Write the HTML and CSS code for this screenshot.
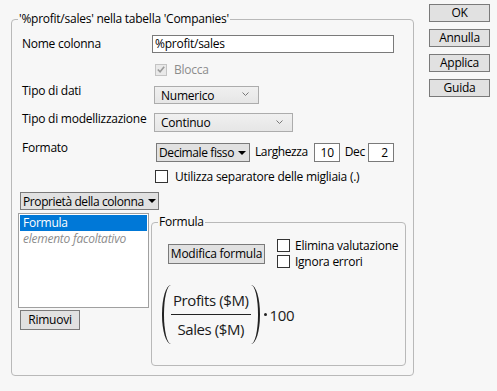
FILE: index.html
```html
<!DOCTYPE html><html><head><meta charset="utf-8">
<title>Colonna - %profit/sales</title>
<link rel="stylesheet" href="styles.css">
</head>
<body>
<div class="dialog">

<fieldset class="main">
	<legend>'%profit/sales' nella tabella 'Companies'</legend>

	<div class="row r-name">
		<span class="lbl">Nome colonna</span>
		<div class="textbox wide">%profit/sales</div>
	</div>
	<div class="row r-lock">
		<span class="lbl"></span>
		<span class="check disabled"><span class="box"><svg width="11" height="11" viewBox="0 0 11 11"><path d="M2 5.5 L4.5 8 L9 2.5" fill="none" stroke="#9a9a9a" stroke-width="1.8"/></svg></span>Blocca</span>
	</div>
	<div class="row r-type">
		<span class="lbl">Tipo di dati</span>
		<div class="combo w1">Numerico<svg class="chev" width="7" height="5" viewBox="0 0 7 5"><path d="M0.5 0.5 L3.5 3.5 L6.5 0.5" fill="none" stroke="#777" stroke-width="1"/></svg></div>
	</div>
	<div class="row r-model">
		<span class="lbl">Tipo di modellizzazione</span>
		<div class="combo w2">Continuo<svg class="chev" width="7" height="5" viewBox="0 0 7 5"><path d="M0.5 0.5 L3.5 3.5 L6.5 0.5" fill="none" stroke="#777" stroke-width="1"/></svg></div>
	</div>
	<div class="row r-format">
		<span class="lbl">Formato</span>
		<div class="menu fmt">Decimale fisso <span class="tri"></span></div>
		<span class="small-lbl">Larghezza</span>
		<div class="textbox num">10</div>
		<span class="small-lbl dec">Dec</span>
		<div class="textbox num">2</div>
	</div>
	<div class="row r-sep">
		<span class="lbl"></span>
		<span class="check"><span class="box"></span>Utilizza separatore delle migliaia (.)</span>
	</div>

	<div class="menu props">Proprietà della colonna <span class="tri"></span></div>

	<div class="lower">
		<div class="side">
			<div class="listbox">
				<div class="item sel">Formula</div>
				<div class="item opt">elemento facoltativo</div>
			</div>
			<button class="btn remove">Rimuovi</button>
		</div>

		<fieldset class="formula">
			<legend>Formula</legend>
			<div class="f-top">
				<button class="btn edit">Modifica formula</button>
				<div class="f-checks">
					<span class="check"><span class="box"></span>Elimina valutazione</span>
					<span class="check"><span class="box"></span>Ignora errori</span>
				</div>
			</div>
			<div class="expr">
				<span class="paren left"></span>
				<span class="frac">
					<span class="num-part">Profits ($M)</span>
					<span class="den-part">Sales ($M)</span>
				</span>
				<span class="paren right"></span>
				<span class="dot"></span>
				<span class="factor">100</span>
			</div>
		</fieldset>
	</div>
</fieldset>

<div class="actions">
	<button class="btn act">OK</button>
	<button class="btn act">Annulla</button>
	<button class="btn act">Applica</button>
	<button class="btn act">Guida</button>
</div>

</div>
</body>
</html>
```

FILE: styles.css
```css
body {
	margin: 0;
	background: #f7f7f7;
	font-family: "Open Sans", "Liberation Sans", sans-serif;
	font-size: 12px;
	letter-spacing: -0.25px;
	color: #000;
}
.dialog {
	display: flex;
	align-items: flex-start;
	width: 497px;
	height: 391px;
}
fieldset {
	margin: 0;
	border: 1px solid #b9b9b9;
	border-radius: 4px;
	min-width: 0;
}
legend {
	line-height: 16px;
	padding: 0 1px;
}
.main {
	margin: 11px 0 0 11px;
	width: 403px;
	height: 365px;
	box-sizing: border-box;
	padding: 8px 7px 0 6px;
}
.row {
	display: flex;
	align-items: flex-start;
}
.lbl {
	width: 130px;
	margin-left: 4px;
	line-height: 16px;
	flex: none;
}
.r-name { height: 18px; }
.r-name .lbl { margin-top: 1px; }
.r-lock { margin-top: 9px; height: 14px; }
.r-type { margin-top: 10px; }
.r-type .lbl { margin-top: -3px; }
.r-model { margin-top: 9px; }
.r-model .lbl { margin-top: -2px; }
.r-format { margin-top: 11px; }
.r-format .lbl { margin-top: -3px; }
.r-sep { margin-top: 7px; }

.textbox {
	background: #fff;
	border: 1px solid #7a7a7a;
	height: 18px;
	box-sizing: border-box;
	line-height: 16px;
	padding: 0 2px;
}
.textbox.wide { width: 242px; }
.textbox.num {
	width: 26px;
	text-align: right;
	padding: 0 5px;
	height: 19px;
	line-height: 17px;
}
.combo {
	display: flex;
	align-items: center;
	justify-content: space-between;
	box-sizing: border-box;
	height: 18px;
	margin-left: 2px;
	padding: 0 9px 0 6px;
	background: linear-gradient(#f0f0f0, #e6e6e6);
	border: 1px solid #acacac;
}
.w1 { width: 105px; }
.w2 { width: 139px; height: 19px; }
.chev { margin-top: -1px; }
.menu {
	display: inline-flex;
	align-items: center;
	justify-content: space-between;
	box-sizing: border-box;
	height: 19px;
	padding: 0 3px 0 2px;
	background: #e1e1e1;
	border: 1px solid #7a7a7a;
	margin-left: 4px;
	white-space: nowrap;
}
.fmt { width: 94px; letter-spacing: -0.4px; }
.tri {
	width: 0;
	height: 0;
	margin-left: 4px;
	border-left: 4px solid transparent;
	border-right: 4px solid transparent;
	border-top: 4px solid #000;
}
.small-lbl {
	margin: 1px 6px 0 5px;
	line-height: 16px;
	letter-spacing: -0.4px;
}
.small-lbl.dec { margin-right: 3px; }
.check {
	display: inline-flex;
	align-items: center;
	line-height: 15px;
}
.check .box {
	width: 13px;
	height: 13px;
	box-sizing: border-box;
	border: 1px solid #333;
	background: #fff;
	margin-right: 7px;
	display: flex;
	align-items: center;
	justify-content: center;
}
.r-lock .check, .r-sep .check { margin-left: 3px; }
.check.disabled { color: #8c8c8c; }
.check.disabled .box {
	border-color: #c4c4c4;
	background: #e9e9e9;
	width: 12px;
	height: 12px;
}
.props {
	margin: 8px 0 0 2px;
	height: 18px;
	width: 139px;
	padding-left: 2px;
	letter-spacing: -0.4px;
}
.lower {
	display: flex;
	align-items: flex-start;
	margin-top: 3px;
}
.side {
	width: 131px;
	flex: none;
}
.listbox {
	height: 95px;
	box-sizing: border-box;
	border: 1px solid #a0a0a0;
	background: #fff;
	padding: 1px;
}
.item {
	line-height: 16px;
	padding: 0 3px;
}
.item.sel {
	background: #0078d7;
	color: #fff;
}
.item.opt {
	color: #8c8c8c;
	font-style: italic;
}
.btn {
	font: inherit;
	letter-spacing: inherit;
	color: #000;
	background: #e1e1e1;
	border: 1px solid #7a7a7a;
	border-radius: 0;
	padding: 0;
	line-height: 16px;
	box-sizing: border-box;
}
.remove {
	margin: 2px 0 0 2px;
	width: 60px;
	height: 20px;
}
.formula {
	margin: 1px 0 0 2px;
	width: 256px;
	height: 152px;
	box-sizing: border-box;
	padding: 8px 4px 0 16px;
}
.formula legend {
	margin-left: -10px;
}
.f-top {
	display: flex;
	align-items: flex-start;
}
.edit {
	margin-top: 6px;
	width: 97px;
	height: 20px;
}
.f-checks {
	display: flex;
	flex-direction: column;
	gap: 1px;
	margin-left: 12px;
}
.f-checks .check .box { margin-right: 5px; }
.expr {
	display: flex;
	align-items: center;
	margin: 16px 0 0 -6px;
	font-size: 15px;
	letter-spacing: -0.4px;
	color: #1a1a1a;
}
.paren {
	width: 9px;
	height: 59px;
	box-sizing: border-box;
}
.paren.left {
	border-left: 2px solid #222;
	border-radius: 9px 0 0 9px / 29px 0 0 29px;
}
.paren.right {
	border-right: 2px solid #222;
	border-radius: 0 9px 9px 0 / 0 29px 29px 0;
}
.frac {
	display: flex;
	flex-direction: column;
	align-items: center;
}
.num-part {
	border-bottom: 1px solid #222;
	padding: 0 2px 4px;
	line-height: 19px;
}
.den-part {
	padding-top: 5px;
	line-height: 19px;
}
.dot {
	width: 3px;
	height: 3px;
	border-radius: 50%;
	background: #222;
	margin: 0 3px 0 4px;
}
.actions {
	display: flex;
	flex-direction: column;
	gap: 7px;
	margin: 4px 0 0 15px;
}
.act {
	width: 61px;
	height: 18px;
}
```
